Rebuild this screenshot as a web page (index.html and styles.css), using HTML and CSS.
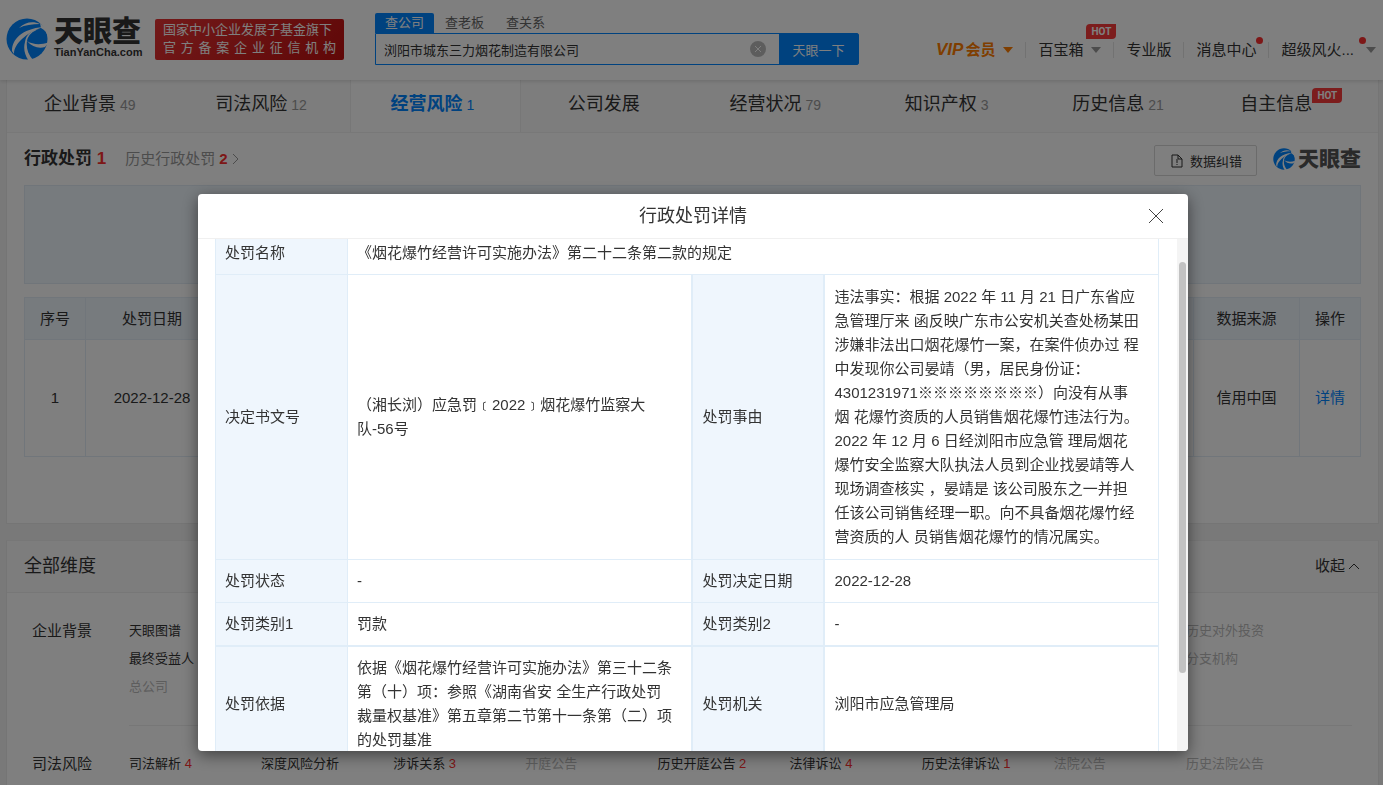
FILE: index.html
```html
<!DOCTYPE html>
<html lang="zh-CN">
<head>
    <meta charset="UTF-8">
    <title>天眼查</title>
    <link rel="stylesheet" href="styles.css">
</head>
<body>
    <svg class="sprite" aria-hidden="true">
        <symbol id="swirl" viewBox="0 0 42 42">
            <circle cx="21" cy="21" r="20.5" fill="#0084ff"/>
            <path d="M34 5 L42 12 L42 19 C41 15 39 12 35 10 Z" fill="#fff"/>
            <path d="M6 33 C6 21 16 11 37 9 C28 12 21 16 16 21 C11 26 8 30 8 36 Z" fill="#fff"/>
            <path d="M13 10 C19 4 27 3 34 6 C26 6 19 7 13 10 Z" fill="#fff"/>
            <path d="M19 24 C17 31 19 38 23 43 L27 42 C22 36 20 30 21 23 C22 17 27 13 33 11 C26 12 20 16 19 24 Z" fill="#fff"/>
            <path d="M21 23 C26 29 33 31 39 29 L43 24 C36 27 27 27 21 23 Z" fill="#fff"/>
        </symbol>
    </svg>

    <header class="header">
        <a class="logo" href="#">
            <svg class="logo-icon"><use href="#swirl"/></svg>
            <span class="logo-text">
                <b>天眼查</b>
                <i>TianYanCha.com</i>
            </span>
        </a>
        <div class="slogan">
            <p>国家中小企业发展子基金旗下</p>
            <p class="spread">官 方 备 案 企 业 征 信 机 构</p>
        </div>
        <form class="search">
            <div class="search-tabs">
                <a class="active" href="#">查公司</a>
                <a href="#">查老板</a>
                <a href="#">查关系</a>
            </div>
            <div class="search-box">
                <input type="text" aria-label="公司名称" value="浏阳市城东三力烟花制造有限公司">
                <button class="clear" type="button" aria-label="清空">
                    <svg viewBox="0 0 16 16"><circle cx="8" cy="8" r="8" fill="#bbb"/><path d="M5 5l6 6M11 5l-6 6" stroke="#fff"/></svg>
                </button>
                <button class="submit" type="button">天眼一下</button>
            </div>
        </form>
        <nav class="user-nav">
            <a class="vip" href="#"><em>VIP</em>会员<span class="caret"></span></a>
            <a href="#">百宝箱<span class="caret"></span><span class="hot">HOT</span></a>
            <a href="#">专业版</a>
            <a href="#">消息中心<span class="dot"></span></a>
            <a class="user" href="#">超级风火...<span class="caret"></span><span class="dot"></span></a>
        </nav>
    </header>

    <main class="page">
        <section class="card company">
            <nav class="tabs">
                <a href="#">企业背景<small>49</small></a>
                <a href="#">司法风险<small>12</small></a>
                <a class="active" href="#">经营风险<small>1</small></a>
                <a href="#">公司发展</a>
                <a href="#">经营状况<small>79</small></a>
                <a href="#">知识产权<small>3</small></a>
                <a href="#">历史信息<small>21</small></a>
                <a href="#"><span class="tab-name">自主信息<span class="hot">HOT</span></span></a>
            </nav>
            <div class="title-row">
                <h2>行政处罚 <span class="red">1</span></h2>
                <a class="history" href="#">历史行政处罚 <b class="red">2</b><svg viewBox="0 0 8 12"><path d="M1 1l5 5-5 5"/></svg></a>
                <button class="report" type="button">
                    <svg viewBox="0 0 12 14"><path d="M1 1h6l4 4v8H1zM7 1v4h4M6 5v4M6 10v1"/></svg>数据纠错
                </button>
                <span class="mark"><svg><use href="#swirl"/></svg>天眼查</span>
            </div>
            <div class="filter"></div>
            <table class="list">
                <thead>
                    <tr>
                        <th class="no">序号</th>
                        <th class="date">处罚日期</th>
                        <th></th>
                        <th class="source">数据来源</th>
                        <th class="no">操作</th>
                    </tr>
                </thead>
                <tbody>
                    <tr>
                        <td>1</td>
                        <td>2022-12-28</td>
                        <td></td>
                        <td>信用中国</td>
                        <td><a href="#">详情</a></td>
                    </tr>
                </tbody>
            </table>
        </section>

        <section class="card">
            <div class="card-head">
                <h3>全部维度</h3>
                <a href="#">收起<svg viewBox="0 0 12 8"><path d="M1 7l5-5 5 5"/></svg></a>
            </div>
            <div class="group">
                <h4>企业背景</h4>
                <div class="links">
                    <a href="#">天眼图谱</a>
                    <a class="off end" href="#">历史对外投资</a>
                    <a href="#">最终受益人</a>
                    <a class="off end" href="#">分支机构</a>
                    <a class="off" href="#">总公司</a>
                </div>
            </div>
            <div class="group">
                <h4>司法风险</h4>
                <div class="links">
                    <a href="#">司法解析 <span class="red">4</span></a>
                    <a href="#">深度风险分析</a>
                    <a href="#">涉诉关系 <span class="red">3</span></a>
                    <a class="off" href="#">开庭公告</a>
                    <a href="#">历史开庭公告 <span class="red">2</span></a>
                    <a href="#">法律诉讼 <span class="red">4</span></a>
                    <a href="#">历史法律诉讼 <span class="red">1</span></a>
                    <a class="off" href="#">法院公告</a>
                    <a class="off" href="#">历史法院公告</a>
                </div>
            </div>
        </section>
    </main>

    <div class="overlay">
        <div class="modal" role="dialog" aria-labelledby="modalTitle">
            <div class="modal-head">
                <h2 id="modalTitle">行政处罚详情</h2>
                <button class="close" type="button" aria-label="关闭">
                    <svg viewBox="0 0 14 14"><path d="M0 0l14 14M14 0L0 14"/></svg>
                </button>
            </div>
            <div class="modal-body">
                <div class="modal-scroll" id="modalScroll">
                    <table class="detail">
                        <colgroup>
                            <col class="col-name">
                            <col>
                            <col class="col-name">
                            <col class="col-last">
                        </colgroup>
                        <tr>
                            <th>处罚名称</th>
                            <td colspan="3">《烟花爆竹经营许可实施办法》第二十二条第二款的规定</td>
                        </tr>
                        <tr>
                            <th>决定书文号</th>
                            <td>（湘长浏）应急罚﹝2022﹞烟花爆竹监察大<br>队-56号</td>
                            <th class="mid">处罚事由</th>
                            <td class="mid long">违法事实：根据 2022 年 11 月 21 日广东省应<br>急管理厅来 函反映广东市公安机关查处杨某田<br>涉嫌非法出口烟花爆竹一案，在案件侦办过 程<br>中发现你公司晏靖（男，居民身份证：<br>4301231971※※※※※※※※）向没有从事<br>烟 花爆竹资质的人员销售烟花爆竹违法行为。<br>2022 年 12 月 6 日经浏阳市应急管 理局烟花<br>爆竹安全监察大队执法人员到企业找晏靖等人<br>现场调查核实 ，晏靖是 该公司股东之一并担<br>任该公司销售经理一职。向不具备烟花爆竹经<br>营资质的人 员销售烟花爆竹的情况属实。</td>
                        </tr>
                        <tr>
                            <th>处罚状态</th>
                            <td>-</td>
                            <th class="mid">处罚决定日期</th>
                            <td class="mid">2022-12-28</td>
                        </tr>
                        <tr>
                            <th>处罚类别1</th>
                            <td>罚款</td>
                            <th class="mid">处罚类别2</th>
                            <td class="mid">-</td>
                        </tr>
                        <tr class="basis">
                            <th>处罚依据</th>
                            <td>依据《烟花爆竹经营许可实施办法》第三十二条<br>第（十）项：参照《湖南省安 全生产行政处罚<br>裁量权基准》第五章第二节第十一条第（二）项<br>的处罚基准</td>
                            <th class="mid">处罚机关</th>
                            <td class="mid">浏阳市应急管理局</td>
                        </tr>
                    </table>
                </div>
                <div class="scrollbar"><div class="thumb"></div></div>
            </div>
        </div>
    </div>

    <script>
        document.getElementById('modalScroll').scrollTop = 30;
    </script>
</body>
</html>
```
FILE: styles.css
```css
* {
    box-sizing: border-box;
}

body {
    margin: 0;
    height: 100vh;
    overflow: hidden;
    background: #f3f3f3;
    color: #333;
    font-family: "Liberation Sans", "Noto Sans CJK SC", sans-serif;
    font-size: 15px;
    line-height: 24px;
}

h2, h3, h4, p {
    margin: 0;
    font-weight: normal;
}

a {
    color: inherit;
    text-decoration: none;
}

button {
    padding: 0;
    border: none;
    background: none;
    color: inherit;
    font-family: inherit;
    cursor: pointer;
}

svg {
    display: block;
    fill: none;
}

.sprite {
    display: none;
}

.red {
    color: #fb2f2f;
}

/* header */
.header {
    position: relative;
    display: flex;
    align-items: center;
    height: 80px;
    padding: 0 7px 2px 6px;
    background: #fff;
    box-shadow: 0 1px 4px rgba(0, 0, 0, 0.15);
    white-space: nowrap;
}

.logo {
    display: flex;
    gap: 6px;
    width: 149px;
}

.logo-icon {
    width: 42px;
    height: 42px;
}

.logo-text b {
    display: block;
    font-size: 29px;
    font-weight: 900;
    line-height: 28px;
}

.logo-text i {
    display: block;
    font-size: 11px;
    font-style: normal;
    font-weight: bold;
    line-height: 12px;
}

.slogan {
    width: 189px;
    height: 41px;
    padding: 2px 8px;
    border-radius: 2px;
    background: linear-gradient(135deg, #e53333, #c01010);
    color: #fff;
    font-size: 13px;
    line-height: 18px;
}

.slogan .spread {
    text-align-last: justify;
}

.search {
    width: 484px;
    height: 52px;
    margin-left: 31px;
}

.search-tabs {
    display: flex;
    height: 20px;
    color: #666;
    font-size: 13px;
    line-height: 20px;
}

.search-tabs a {
    padding: 0 11px;
}

.search-tabs .active {
    padding: 0 10px;
    border-radius: 2px 2px 0 0;
    background: #0084ff;
    color: #fff;
}

.search-box {
    display: flex;
    height: 32px;
    border: 1px solid #0084ff;
    border-radius: 0 2px 2px 0;
}

.search-box input {
    flex: 1;
    min-width: 0;
    padding: 0 8px;
    border: none;
    outline: none;
    background: none;
    color: #333;
    font-family: inherit;
    font-size: 13px;
}

.clear {
    width: 16px;
    margin-right: 13px;
}

.submit {
    width: 79px;
    background: #0084ff;
    color: #fff;
    font-size: 13px;
}

.user-nav {
    display: flex;
    margin-left: auto;
    margin-top: 22px;
    line-height: 16px;
}

.user-nav a {
    position: relative;
    display: flex;
    align-items: center;
    padding: 0 12px;
    border-left: 1px solid #e5e5e5;
}

.user-nav a:first-child {
    border-left: none;
}

.user-nav .user {
    padding-right: 0;
}

.user-nav .vip {
    color: #ff7d00;
    font-weight: bold;
}

.vip em {
    margin-right: 2px;
    font-size: 17px;
}

.caret {
    margin-left: 8px;
    border: 5px solid transparent;
    border-top: 6px solid #999;
    border-bottom: none;
}

.user .caret {
    margin-left: 12px;
}

.vip .caret {
    border-top-color: #ff7d00;
}

.dot {
    position: absolute;
    top: -5px;
    right: 5px;
    width: 7px;
    height: 7px;
    border-radius: 50%;
    background: #fb2f2f;
}

.user .dot {
    right: 10px;
}

.hot {
    position: absolute;
    top: -18px;
    right: -3px;
    width: 30px;
    border-radius: 4px 0 4px 0;
    background: #f93b3b;
    color: #fff;
    font-family: Roboto, sans-serif;
    font-size: 10px;
    font-weight: bold;
    line-height: 15px;
    text-align: center;
}

/* page */
.page {
    padding: 0 4px 0 6px;
}

.card {
    margin-bottom: 16px;
    border: 1px solid #eaeaea;
    border-top-color: #eee;
    background: #fff;
}

.company {
    height: 444px;
    border-top: none;
}

.tabs {
    display: grid;
    grid-template-columns: repeat(8, 1fr);
    height: 53px;
    border-bottom: 1px solid #f0f0f0;
    background: #fafafa;
    font-size: 18px;
}

.tabs a {
    padding: 12px 6px 0 0;
    text-align: center;
}

.tabs .active {
    border: solid #eee;
    border-width: 0 1px;
    background: #fff;
    color: #0084ff;
    font-weight: bold;
}

.tabs small {
    margin-left: 4px;
    color: #999;
    font-size: 14px;
    font-weight: normal;
}

.tabs .active small {
    color: inherit;
}

.tab-name {
    position: relative;
    padding-right: 26px;
}

.tab-name .hot {
    top: -6px;
    right: -4px;
}

.title-row {
    display: flex;
    align-items: center;
    height: 52px;
    padding: 3px 17px 0;
}

.title-row h2 {
    padding-bottom: 4px;
    font-size: 17px;
    font-weight: bold;
}

.history {
    display: flex;
    align-items: center;
    gap: 4px;
    margin-left: 19px;
    padding-bottom: 4px;
    color: #999;
}

.history svg {
    width: 8px;
    height: 12px;
    stroke: #999;
}

.report {
    display: flex;
    align-items: center;
    gap: 7px;
    height: 31px;
    margin-left: auto;
    padding: 0 14px 0 16px;
    border: 1px solid #d6d6d6;
    border-radius: 2px;
    font-size: 13px;
}

.report svg {
    width: 12px;
    height: 14px;
    stroke: #333;
}

.mark {
    display: flex;
    align-items: center;
    gap: 3px;
    margin-left: 16px;
    padding-bottom: 4px;
    color: #555;
    font-size: 21px;
    font-weight: 900;
}

.mark svg {
    width: 22px;
    height: 22px;
}

.filter {
    height: 99px;
    margin: 0 17px 13px;
    border: 1px solid #e0ebf5;
    background: #eff6fd;
}

.list {
    width: calc(100% - 34px);
    margin: 0 17px;
    border-collapse: collapse;
    table-layout: fixed;
    text-align: center;
}

.list th, .list td {
    padding: 0;
    border: 1px solid #e2edf7;
}

.list th {
    height: 42px;
    background: #eff6fd;
    font-weight: normal;
}

.list td {
    height: 117px;
}

.list .no {
    width: 61px;
}

.list .date {
    width: 133px;
}

.list .source {
    width: 106px;
}

.list a {
    color: #0084ff;
}

.card-head {
    display: flex;
    align-items: center;
    justify-content: space-between;
    height: 52px;
    padding: 0 18px 2px 17px;
    border-bottom: 1px solid #eee;
    background: #fafafa;
}

.card-head h3 {
    font-size: 18px;
}

.card-head a {
    display: flex;
    align-items: center;
    gap: 3px;
}

.card-head svg {
    width: 12px;
    height: 8px;
    stroke: #333;
}

.group {
    display: flex;
    margin: 0 26px 0 25px;
}

.group h4 {
    width: 97px;
    padding-top: 26px;
}

.links {
    flex: 1;
    display: grid;
    grid-template-columns: repeat(9, 1fr);
    align-content: start;
    row-gap: 4px;
    padding: 26px 34px 26px 0;
    border-bottom: 1px solid #eee;
    font-size: 13px;
    white-space: nowrap;
}

.off {
    color: #bbb;
}

.end {
    grid-column: 9;
}

/* modal */
.overlay {
    position: fixed;
    top: 0;
    right: 0;
    bottom: 0;
    left: 0;
    display: flex;
    justify-content: center;
    align-items: flex-end;
    padding: 0 0 34px 3px;
    background: rgba(0, 0, 0, 0.5);
}

.modal {
    width: 990px;
    overflow: hidden;
    border-radius: 4px;
    background: #fff;
    box-shadow: 0 4px 16px rgba(0, 0, 0, 0.5);
}

.modal-head {
    position: relative;
    padding: 10px 0;
    border-bottom: 1px solid #f0f0f0;
    text-align: center;
}

.modal-head h2 {
    font-size: 18px;
}

.close {
    position: absolute;
    top: 15px;
    right: 25px;
}

.close svg {
    width: 14px;
    height: 14px;
    overflow: visible;
    stroke: #444;
}

.modal-body {
    display: flex;
    height: 512px;
}

.modal-scroll {
    flex: 1;
    overflow: hidden;
    padding: 22px 18px 22px 17px;
}

.scrollbar {
    width: 11px;
    padding: 23px 2px;
    background: #f4f4f4;
}

.thumb {
    height: 411px;
    border-radius: 4px;
    background: #c2c2c2;
}

.detail {
    width: 100%;
    border-collapse: collapse;
    table-layout: fixed;
}

.col-name {
    width: 132px;
}

.col-last {
    width: 334px;
}

.detail th, .detail td {
    padding: 9px;
    border: 1px solid #e0edf8;
    font-weight: normal;
    text-align: left;
}

.detail th {
    background: #eff6fd;
}

.detail td {
    white-space: nowrap;
}

.detail .mid {
    border-left-width: 2px;
}

.detail .basis > * {
    border-top-width: 2px;
}

.detail .long {
    padding-top: 10px;
    padding-bottom: 10px;
}
```
